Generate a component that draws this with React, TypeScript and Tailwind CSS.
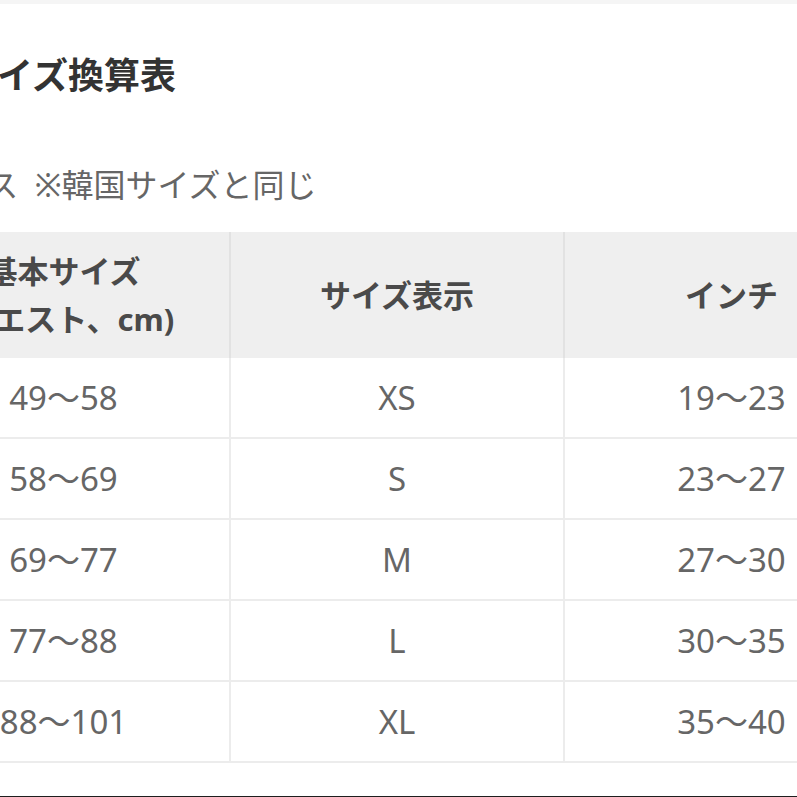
import React from "react";

const rows: [string, string, string][] = [
  ["49〜58", "XS", "19〜23"],
  ["58〜69", "S", "23〜27"],
  ["69〜77", "M", "27〜30"],
  ["77〜88", "L", "30〜35"],
  ["88〜101", "XL", "35〜40"],
];

const font = { fontFamily: '"Noto Sans", "Noto Sans CJK JP", sans-serif' };

export default function App() {
  return (
    <div
      className="w-[797px] h-[797px] overflow-hidden bg-white flex flex-col"
      style={font}
    >
      <div className="h-[4px] bg-[#f5f5f5] shrink-0" />
      <div className="ml-[-102px] w-[1000px] shrink-0">
        <h1 className="mt-[47px] pl-[63px] text-[36px] leading-[50px] font-bold text-[#333] whitespace-nowrap">
          サイズ換算表
        </h1>
        <p className="mt-[62px] ml-[-36px] text-[32px] leading-[44px] text-[#666] whitespace-nowrap">
          レディース&nbsp;&nbsp;※韓国サイズと同じ
        </p>
        <div className="mt-[25px] grid grid-cols-[333px_334px_333px]">
          <div className="h-[126px] bg-[#efefef] border-r-2 border-[#e2e2e2] flex flex-col items-center justify-center text-[31px] leading-[48px] font-bold text-[#4a4a4a] whitespace-nowrap">
            <span>基本サイズ</span>
            <span>(ウエスト、cm)</span>
          </div>
          <div className="h-[126px] bg-[#efefef] border-r-2 border-[#e2e2e2] flex items-center justify-center text-[31px] font-bold text-[#4a4a4a]">
            サイズ表示
          </div>
          <div className="h-[126px] bg-[#efefef] flex items-center justify-center text-[31px] font-bold text-[#4a4a4a]">
            インチ
          </div>
          {rows.map((r) => (
            <React.Fragment key={r[1]}>
              <div className="h-[81px] border-b-2 border-r-2 border-[#ececec] flex items-center justify-center text-[33px] text-[#666]">
                {r[0]}
              </div>
              <div className="h-[81px] border-b-2 border-r-2 border-[#ececec] flex items-center justify-center text-[33px] text-[#666]">
                {r[1]}
              </div>
              <div className="h-[81px] border-b-2 border-[#ececec] flex items-center justify-center text-[33px] text-[#666]">
                {r[2]}
              </div>
            </React.Fragment>
          ))}
        </div>
      </div>
      <div className="mt-auto h-[1px] bg-[#1e1e1e] shrink-0" />
    </div>
  );
}
